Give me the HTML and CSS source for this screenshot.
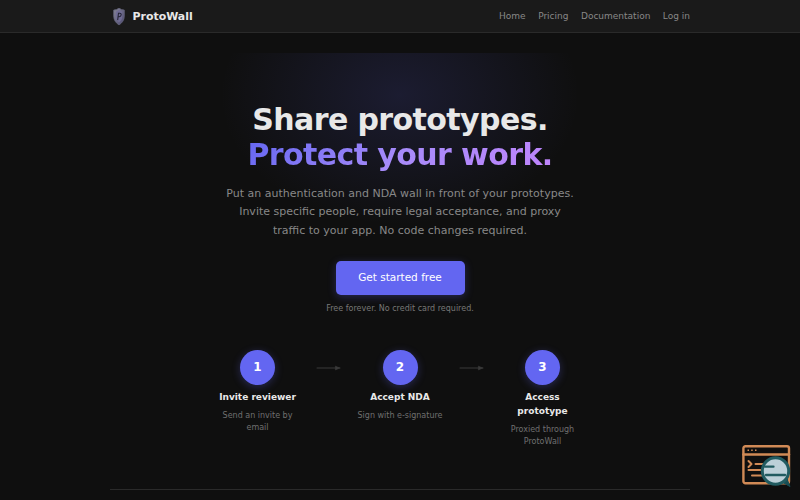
FILE: index.html
```html
<!DOCTYPE html>
<html lang="en">
<head>
    <meta charset="utf-8">
    <title>ProtoWall</title>
    <link rel="stylesheet" href="styles.css">
</head>
<body>
    <header class="navbar">
        <div class="container nav-inner">
            <a class="brand" href="#">
                <svg class="logo" viewBox="0 0 24 34">
                    <defs>
                        <linearGradient id="shield" x1="0" y1="0" x2="1" y2="1">
                            <stop offset="0" stop-color="#8a8a98" />
                            <stop offset="1" stop-color="#4c4870" />
                        </linearGradient>
                    </defs>
                    <path d="M12 0 Q16 4 22 4 V15 C22 23 18 28 12 32 C6 28 2 23 2 15 V4 Q8 4 12 0 Z" fill="url(#shield)" stroke="#62627a" stroke-width="1.5" />
                    <path d="M12 4 L18 7 V16 C18 21 16 24 12 27 C8 24 6 21 6 16 V7 Z" fill="#706c94" />
                    <path d="M9.5 23 L11 10 H13 C17.5 9 17 16.5 12.5 16.5 H11" fill="none" stroke="#232333" stroke-width="2" />
                </svg>
                ProtoWall
            </a>
            <nav class="nav-links">
                <a href="#">Home</a>
                <a href="#">Pricing</a>
                <a href="#">Documentation</a>
                <a href="#">Log in</a>
            </nav>
        </div>
    </header>

    <main class="container">
        <section class="hero">
            <h1>Share prototypes.<br><span class="accent">Protect your work.</span></h1>
            <p class="subtitle">Put an authentication and NDA wall in front of your prototypes. Invite specific people, require legal acceptance, and proxy traffic to your app. No code changes required.</p>
            <a class="cta" href="#">Get started free</a>
            <p class="note">Free forever. No credit card required.</p>

            <div class="steps">
                <div class="step">
                    <div class="number">1</div>
                    <h3>Invite reviewer</h3>
                    <p>Send an invite by email</p>
                </div>
                <svg class="arrow" viewBox="0 0 40 16">
                    <path d="M1 8 H39" stroke="#3a3a3a" stroke-width="1.6" />
                    <path d="M31 5 L38 8 L31 11 Z" fill="#3a3a3a" stroke="#3a3a3a" />
                </svg>
                <div class="step">
                    <div class="number">2</div>
                    <h3>Accept NDA</h3>
                    <p>Sign with e-signature</p>
                </div>
                <svg class="arrow" viewBox="0 0 40 16">
                    <path d="M1 8 H39" stroke="#3a3a3a" stroke-width="1.6" />
                    <path d="M31 5 L38 8 L31 11 Z" fill="#3a3a3a" stroke="#3a3a3a" />
                </svg>
                <div class="step">
                    <div class="number">3</div>
                    <h3>Access prototype</h3>
                    <p>Proxied through ProtoWall</p>
                </div>
            </div>
        </section>
        <hr class="divider">
    </main>

    <svg class="badge" viewBox="0 0 50 44">
        <g fill="none" stroke="#d18a56" stroke-width="2.4" stroke-linecap="round" stroke-linejoin="round">
            <rect x="2.4" y="2.3" width="45.6" height="37" rx="2" />
            <path d="M2.4 10.5 H48" />
            <path d="M7.5 17 L10.5 20 L7.5 23 M14.5 20 H24 M7.5 26 H20 M11 31.5 H21" stroke-width="2" />
        </g>
        <path d="M6.5 6.3 H8 M10.2 6.3 H11.7 M14 6.3 H15.5" stroke="#d18a56" stroke-width="1.5" />
        <path d="M41 38 L46 35 L49 42.5 Z" fill="#174f56" stroke="#174f56" />
        <circle cx="34.5" cy="27" r="13.2" fill="#bcd0d8" stroke="#215b60" stroke-width="3" />
        <path d="M24 22.7 H32.5 M25 31 H44" stroke="#215b60" stroke-width="2.3" stroke-linecap="round" />
    </svg>
</body>
</html>
```

FILE: styles.css
```css
* {
    box-sizing: border-box;
}

body {
    margin: 0;
    height: 500px;
    overflow: hidden;
    background-color: #0f0f0f;
    color: #e8e8e8;
    font-family: "DejaVu Sans", sans-serif;
    font-size: 10px;
    line-height: 1.6;
}

a {
    color: inherit;
    text-decoration: none;
}

.container {
    width: 580px;
    margin: 0 auto;
}

.navbar {
    height: 33px;
    background-color: #1a1a1a;
    border-bottom: 1px solid #2a2a2a;
}

.nav-inner {
    display: flex;
    justify-content: space-between;
    align-items: center;
    height: 33px;
}

.brand {
    display: flex;
    align-items: center;
    gap: 4.5px;
    font-size: 10.95px;
    font-weight: bold;
}

.logo {
    width: 18px;
    height: 18px;
}

.nav-links {
    display: flex;
    gap: 12.5px;
    font-size: 9px;
    color: #888;
}

.hero {
    margin-top: 20px;
    padding-top: 50px;
    height: 436px;
    text-align: center;
    background: radial-gradient(ellipse 180px 130px at 50% 42px, rgba(99, 102, 241, 0.15), transparent) no-repeat;
}

h1 {
    margin: 0;
    font-size: 30px;
    line-height: 34.5px;
    letter-spacing: -0.6px;
}

.accent {
    background: linear-gradient(135deg, #6366f1, #a78bfa, #c084fc);
    -webkit-background-clip: text;
    background-clip: text;
    color: transparent;
}

.subtitle {
    width: 350px;
    margin: 13px auto 21px;
    font-size: 11px;
    line-height: 18.4px;
    color: #888;
}

.cta {
    display: block;
    width: 129px;
    height: 33.5px;
    margin: 0 auto;
    border-radius: 5px;
    background-color: #6366f1;
    box-shadow: 0 2px 9px rgba(99, 102, 241, 0.3);
    color: #fff;
    font-size: 10.5px;
    line-height: 33px;
}

.note {
    margin: 7px 0 0;
    font-size: 8px;
    line-height: 13px;
    color: #777;
}

.steps {
    display: flex;
    justify-content: center;
    align-items: flex-start;
    gap: 15px;
    margin-top: 35.3px;
}

.step {
    width: 87.5px;
}

.number {
    width: 35px;
    height: 35px;
    margin: 0 auto 5px;
    border-radius: 50%;
    background-color: #6366f1;
    box-shadow: 0 2px 8px rgba(99, 102, 241, 0.3);
    color: #fff;
    font-size: 12px;
    font-weight: bold;
    line-height: 34px;
}

.step h3 {
    margin: 0 0 5.3px;
    font-size: 9px;
    line-height: 14.2px;
}

.step p {
    margin: 0;
    font-size: 8px;
    line-height: 12.6px;
    color: #707070;
}

.arrow {
    width: 25px;
    height: 10px;
    margin-top: 12.5px;
}

.divider {
    margin: 0;
    border: 0;
    border-top: 1px solid #2a2a2a;
}

/* floating icon in the corner */
.badge {
    position: fixed;
    right: 9px;
    bottom: 12px;
    width: 50px;
    height: 44px;
}
```
